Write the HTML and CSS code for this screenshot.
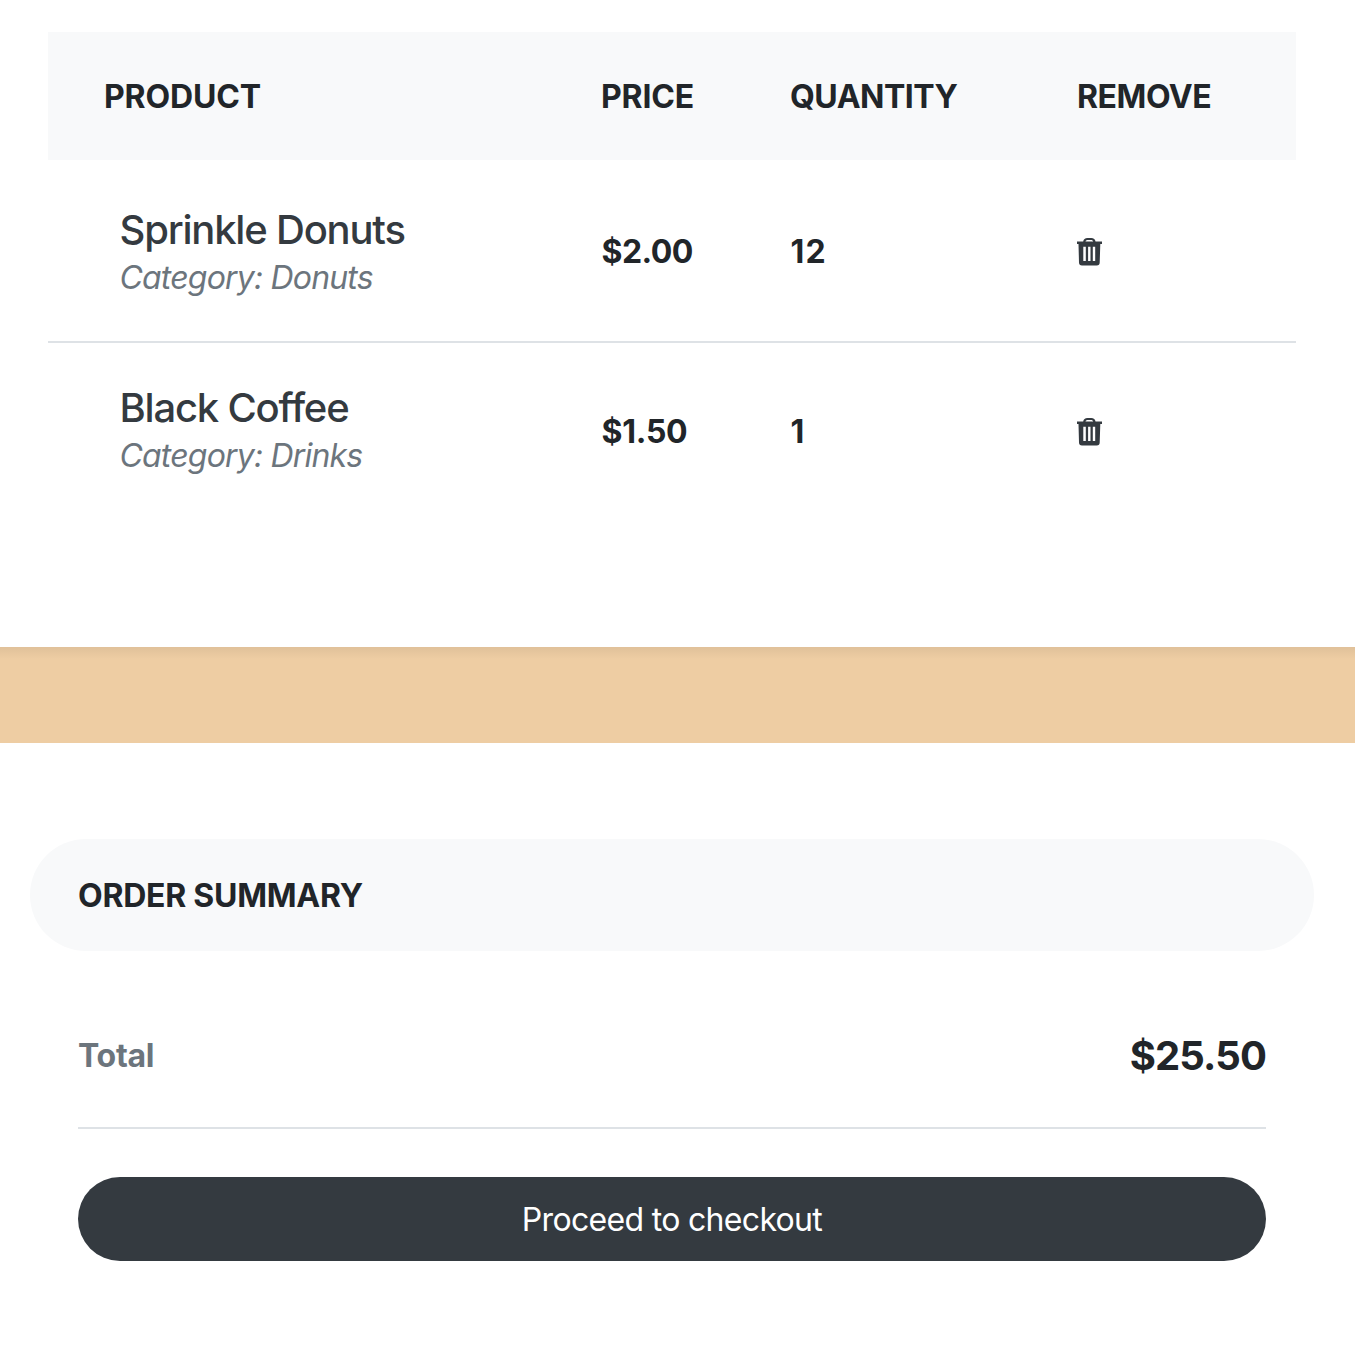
FILE: index.html
```html
<!DOCTYPE html>
<html lang="en">
<head>
<meta charset="utf-8">
<title>Shopping cart</title>
<link rel="stylesheet" href="styles.css">
</head>
<body>
<svg width="0" height="0" class="defs"><symbol id="trash" viewBox="0 0 26 28"><path fill-rule="evenodd" d="M0 3.500h6.200C6.500 1.300 8 0 10.500 0h3.700c2.500 0 4 1.300 4.300 3.500H25v2.500h-1.700L22.700 24.500a3 3 0 0 1-3 3H5a3 3 0 0 1-3-3L1.500 6H0zM8.500 3.500h7.700c-.3-1-1-1.500-2.200-1.500h-3.300C9.500 2 8.800 2.500 8.500 3.500zM6.300 8.700v14.300h2.500V8.700zm4.800 0v14.300h2.400V8.700zm4.700 0v14.300h2.400V8.700z"/></symbol></svg>
<main>
<section class="cart">
<table>
<thead><tr><th class="product">PRODUCT</th><th class="price">PRICE</th><th class="quantity">QUANTITY</th><th class="remove">REMOVE</th></tr></thead>
<tbody>
<tr><td class="item"><h5>Sprinkle Donuts</h5><em>Category: Donuts</em></td><td class="value">$2.00</td><td class="value count">12</td><td><a class="trash"><svg><use href="#trash"/></svg></a></td></tr>
<tr><td class="item"><h5>Black Coffee</h5><em>Category: Drinks</em></td><td class="value">$1.50</td><td class="value count">1</td><td><a class="trash"><svg><use href="#trash"/></svg></a></td></tr>
</tbody>
</table>
</section>
<div class="band"></div>
<section class="summary">
<h2>ORDER SUMMARY</h2>
<div class="total"><strong class="label">Total</strong><strong class="amount">$25.50</strong></div>
<button type="button">Proceed to checkout</button>
</section>
</main>
</body>
</html>
```
FILE: styles.css
```css
* { box-sizing: border-box; }
body { margin: 0; background: #fff; color: #212529; font: 32px/48px Inter, sans-serif; }
.defs { display: block; }
.cart { height: 647px; padding: 32px 59px 0 48px; }
table { width: 1248px; table-layout: fixed; border-collapse: separate; border-spacing: 0; }
th { height: 128px; padding: 2px 0 0; background: #f8f9fa; text-align: left; font-weight: 700; letter-spacing: -0.15px; }
th.product { width: 553px; padding-left: 56px; }
th.price { width: 189px; }
th.quantity { width: 287px; letter-spacing: -0.5px; }
th.remove { letter-spacing: -0.45px; }
td { height: 181px; padding: 2px 0 0; vertical-align: middle; font-weight: 700; }
tr + tr td { height: 181px; padding: 0 0 2px; border-top: 2px solid #dee2e6; }
.value { padding-top: 2px; padding-left: 0.6px; letter-spacing: -0.6px; }
tr + tr .value { padding: 0 0 2px 0.6px; letter-spacing: -0.3px; }
td.count { letter-spacing: 1px; }
tr .item, tr + tr .item { padding-left: 71.5px; }
tr .item { padding-top: 7px; }
tr + tr .item { padding-top: 0; padding-bottom: 2px; }
h5 { margin: 0; font-size: 40px; line-height: 48px; font-weight: 500; color: #343a40; letter-spacing: -1.2px; }
em { display: block; color: #6c757d; font-weight: 400; letter-spacing: -0.82px; }
.trash { display: block; width: 26px; height: 28px; color: #343a40; }
.trash svg { display: block; width: 26px; height: 28px; fill: currentColor; }
.band { height: 96px; background: linear-gradient(rgba(0,0,0,.06), transparent 12px), #eecda3; }
.summary { padding: 96px 41px 0 30px; }
h2 { height: 112px; margin: 0; padding: 33px 48px; border-radius: 56px; background: #f8f9fa; font-size: 32px; line-height: 48px; font-weight: 700; letter-spacing: -0.25px; }
.total { display: flex; align-items: center; justify-content: space-between; height: 129px; margin: 49px 48px 48px; padding-bottom: 15px; border-bottom: 2px solid #dee2e6; }
.label { color: #6c757d; font-weight: 700; letter-spacing: -0.3px; }
.amount { font-size: 40px; font-weight: 700; letter-spacing: -0.9px; }
button { display: block; width: 1188px; height: 84px; margin: 0 48px; padding: 2px 0 0; border: 0; border-radius: 42px; background: #343a40; color: #fff; font: 32px/48px Inter, sans-serif; letter-spacing: -0.68px; }
```
